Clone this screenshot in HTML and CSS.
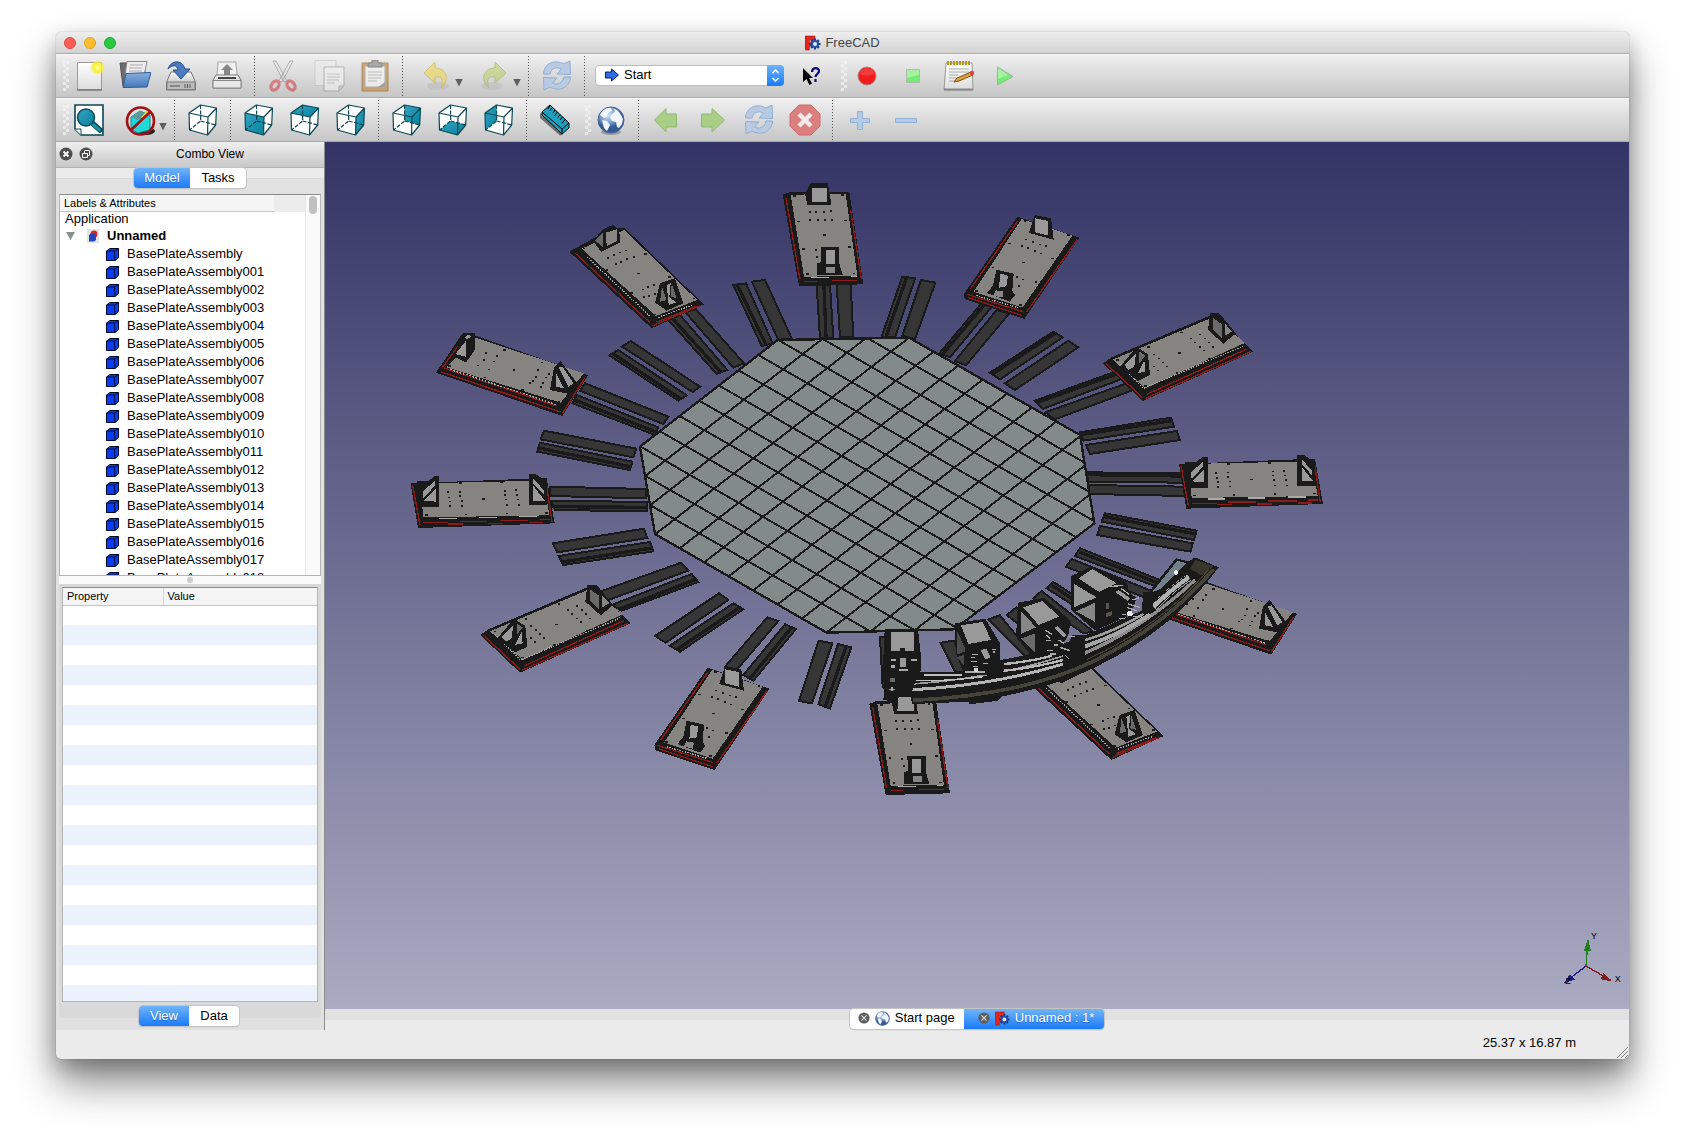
FILE: index.html
```html
<!DOCTYPE html>
<html lang="en">
<head>
<meta charset="utf-8">
<title>FreeCAD</title>
<link rel="stylesheet" href="styles.css">
</head>
<body>
<svg class="defs" aria-hidden="true">
  <defs>
    <linearGradient id="g-paper" x1="0" y1="0" x2="0" y2="1"><stop offset="0" stop-color="#fff"/><stop offset="1" stop-color="#dcdcdc"/></linearGradient>
    <linearGradient id="g-metal" x1="0" y1="0" x2="0" y2="1"><stop offset="0" stop-color="#fafafa"/><stop offset="1" stop-color="#a8a8a8"/></linearGradient>
    <linearGradient id="g-blue" x1="0" y1="0" x2="0" y2="1"><stop offset="0" stop-color="#8ab0dd"/><stop offset="1" stop-color="#4477b8"/></linearGradient>
    <linearGradient id="g-teal" x1="0" y1="0" x2="1" y2="1"><stop offset="0" stop-color="#34a6c2"/><stop offset="1" stop-color="#067f9b"/></linearGradient>
    <radialGradient id="g-sun"><stop offset="0" stop-color="#fff"/><stop offset=".3" stop-color="#fff94a"/><stop offset=".65" stop-color="#f7ee2c" stop-opacity=".9"/><stop offset="1" stop-color="#f7ee2c" stop-opacity="0"/></radialGradient>
    <radialGradient id="g-globe" cx=".4" cy=".3"><stop offset="0" stop-color="#cfe2f7"/><stop offset=".6" stop-color="#7ba2d3"/><stop offset="1" stop-color="#345a94"/></radialGradient>
    <g id="cube-lines" fill="none" stroke="#0b4754" stroke-width="1.2" stroke-linejoin="round">
      <path stroke-dasharray="4 1.5" d="M13.5 1 13.7 17 2.500 26M13.700 17 28.700 21"/>
      <path d="M2 9 21 13 20.500 31 2.500 26zM2 9 13.500 1 29.500 4 21 13M29.500 4 28.700 21 20.500 31"/>
    </g>
    <g id="sync" fill="#b9cbe2" stroke="#8faed4">
      <path d="M2.500 14C3 3 14 -1 23 4L29 1 29.500 14.500 16 14 20.500 9C15 6 10 9 9 14z"/>
      <path d="M29.500 17C29 28 18 32 9 27L3 30 2.500 17.500 16 18 11.500 23C16 26 22 23 23 17z"/>
    </g>
    <g id="freecad">
      <path d="M0 1h10v4H4.500v2.500H8V11H4.500v4H0z" fill="#e8241c" stroke="#8f120d" stroke-width=".5"/>
      <path d="M10 3.500v11M4.500 9h11M6.100 5.100l7.800 7.800M13.900 5.100l-7.800 7.800" stroke="#123a8a" stroke-width="2.200"/>
      <circle cx="10" cy="9" r="3.800" fill="#224fa8"/><circle cx="10" cy="9" r="2" fill="#e4eaf5"/>
    </g>
    <g id="globe"><circle cx="16" cy="16" r="13" fill="url(#g-globe)" stroke="#46649a"/>
      <path d="M5 11C8 5 13 3.500 16 4l1 3-4 2-1 4-3 1zM7 16l5 1 3 4-3 6-3-3zM19 5c4 1 7 5 9 10l-1 5-3 4-2-1-1-5-4-1-2-4 3-4 2-1z" fill="#f3f6fb"/></g>
    <g id="part"><path d="M.5 3 4 .5H12.500V9.500L9 12.500H.5z" fill="#0b3df0" stroke="#00082a"/><path d="M.5 3H8.500L12.500 .5M8.500 3 9 12.500" fill="none" stroke="#00082a"/></g>
    <g id="close"><circle cx="7" cy="7" r="6.500" fill="#4d4d4d"/><path d="M4.500 4.500l5 5M9.500 4.500l-5 5" stroke="#fff" stroke-width="1.800"/></g>
    <g id="close-tab"><circle cx="7" cy="7" r="6.500" fill="#5e5e5e"/><path d="M4 4l6 6M10 4l-6 6" stroke="#ddd" stroke-width="1.300"/></g>
  </defs>
</svg>

<main class="window">
  <header class="titlebar">
    <div class="lights"><button class="light red" aria-label="Close"></button><button class="light amber" aria-label="Minimize"></button><button class="light green" aria-label="Zoom"></button></div>
    <h1 class="title"><svg width="16" height="16" viewBox="0 0 16 16"><use href="#freecad"/></svg>FreeCAD</h1>
  </header>

  <div class="toolbar" role="toolbar" aria-label="File">
    <span class="grip"></span>
    <button class="tool" aria-label="New"><svg viewBox="0 0 32 32"><path d="M4.500 2.500h24v27h-24z" fill="url(#g-paper)" stroke="#9b9b9b"/><path d="M4 30h25" stroke="#777" stroke-width="1.500"/><circle cx="24.500" cy="7.500" r="7.500" fill="url(#g-sun)"/></svg></button>
    <button class="tool" aria-label="Open"><svg viewBox="0 0 32 32"><path d="M1 3h9l2 2h14l-1 20-21 1z" fill="#6d6d6d" stroke="#505050"/><path d="M8 1.500h20l-3 14H6z" fill="#eee" stroke="#888"/><path d="M11 5h13M10 8h13M10 11h13" stroke="#aaa"/><path d="M7 13.500l25-1-4 14.500-24 .5z" fill="url(#g-blue)" stroke="#2d5a97"/></svg></button>
    <button class="tool" aria-label="Save"><svg viewBox="0 0 32 32"><path d="M6 12h20l4.500 10v8h-29v-8z" fill="url(#g-metal)" stroke="#777"/><path d="M2 22h28v7.500H2z" fill="#bcbcbc" stroke="#808080"/><path d="M5 26h10M20 24v4M22.500 24v4M25 24v4" stroke="#555"/><path d="M3 9C6 0 17-1 20 9h5l-9 10-8-9h5C12 5 8 4 3 9z" fill="#4a7abf" stroke="#244d8b"/></svg></button>
    <button class="tool" aria-label="Print"><svg viewBox="0 0 32 32"><path d="M7 2h18l1 14H6z" fill="#f1f1f1" stroke="#a5a5a5"/><path d="M16 4l6 6h-3v5h-6v-5h-3z" fill="#888"/><path d="M5 15h22l3 5v8H2v-8z" fill="url(#g-metal)" stroke="#777"/><path d="M7 17h18v2H7z" fill="#444"/><path d="M2 20.500h28v7.500H2z" fill="#e8e8e8" stroke="#888"/></svg></button>
    <span class="sep"></span>
    <button class="tool faded" aria-label="Cut" disabled><svg viewBox="0 0 32 32"><path d="M6 1l3 0 11 20-3 1zM26 1l-3 0L12 21l3 1z" fill="#eee" stroke="#777"/><g fill="none" stroke="#d42c2c" stroke-width="3.200"><ellipse cx="8" cy="25.500" rx="3.500" ry="5" transform="rotate(35 8 25.500)"/><ellipse cx="24" cy="25.500" rx="3.500" ry="5" transform="rotate(-35 24 25.500)"/></g></svg></button>
    <button class="tool faded" aria-label="Copy" disabled><svg viewBox="0 0 32 32"><path d="M2 .5h21v25H2z" fill="#eee" stroke="#bbb"/><path d="M11 7h20v19l-5 5H11z" fill="#f8f8f8" stroke="#888"/><path d="M14 14h13M14 17h13M14 20h12M14 23h8" stroke="#aaa"/><path d="M31 26h-5v5z" fill="#ccc" stroke="#888"/></svg></button>
    <button class="tool half" aria-label="Paste" disabled><svg viewBox="0 0 32 32"><path d="M3 3h26v28H3z" fill="#c08b3c" stroke="#8b6224"/><path d="M6 6h20v21H6z" fill="#f6f6f6" stroke="#999"/><path d="M9 12h14M9 15h14M9 18h13M9 21h9" stroke="#aaa"/><path d="M26 22v5h-7z" fill="#888"/><path d="M9 7V3h4V0h6v3h4v4z" fill="#888" stroke="#555"/></svg></button>
    <span class="sep"></span>
    <button class="tool menu" aria-label="Undo" disabled><svg class="faded" viewBox="0 0 32 32"><ellipse cx="18" cy="26" rx="11" ry="4" fill="#999" opacity=".4"/><path d="M4 13L15 2v6C27 8 30 20 21 28 24 20 22 16 15 17v6z" fill="#f0d93a" stroke="#c2a21c"/></svg><span class="drop"></span></button>
    <button class="tool menu" aria-label="Redo" disabled><svg class="faded" viewBox="0 0 32 32"><ellipse cx="14" cy="26" rx="11" ry="4" fill="#999" opacity=".4"/><path d="M28 13L17 2v6C5 8 2 20 11 28 8 20 10 16 17 17v6z" fill="#b3cf5a" stroke="#86a63a"/></svg><span class="drop"></span></button>
    <span class="sep"></span>
    <button class="tool" aria-label="Refresh" disabled><svg viewBox="0 0 32 32"><use href="#sync"/></svg></button>
    <span class="sep"></span>
    <div class="combo">
      <svg class="combo-icon" viewBox="0 0 14 14"><path d="M.5 4h6V1l7 6-7 6v-3h-6z" fill="#2b6ee8" stroke="#0a1f55"/></svg>
      <select aria-label="Workbench"><option>Start</option></select>
      <svg class="combo-arrows" viewBox="0 0 16 21"><path d="M5 8l3-3 3 3M5 13l3 3 3-3" fill="none" stroke="#fff" stroke-width="1.500"/></svg>
    </div>
    <button class="tool" aria-label="What's this?"><svg viewBox="0 0 32 32"><path d="M8 8v14l3.500-3 3 6 2.500-1.500-3-5.500h4z" fill="#000"/><path d="M17 12c0-5 7-5 7-1 0 3-3.500 3-3.500 6M20.500 19v3" fill="none" stroke="#0a0a80" stroke-width="2.200"/></svg></button>
    <span class="grip"></span>
    <button class="tool" aria-label="Record macro"><svg viewBox="0 0 32 32"><circle cx="16" cy="16" r="9" fill="#ee1c1c" stroke="#b98080"/><path d="M9 14a7 6 0 0 1 14 0q-7 3-14 0z" fill="#f43a3a"/></svg></button>
    <button class="tool" aria-label="Stop macro" disabled><svg viewBox="0 0 32 32"><path d="M9.500 9.500h13v13h-13z" fill="#72ee72" stroke="#b0b8b0"/><path d="M10 10h12v5l-12 3z" fill="#a6f2a0"/></svg></button>
    <button class="tool" aria-label="Macros"><svg viewBox="0 0 32 32"><path d="M3 3h26l1 27H1z" fill="url(#g-paper)" stroke="#999"/><path d="M1 29.500h29" stroke="#888" stroke-width="2"/><path d="M4 3h23" stroke="#b79a1a" stroke-width="4" stroke-dasharray="2 1"/><path d="M6 9h20M6 12h20M6 15h9M6 18h13M6 21h6" stroke="#aaa"/><path d="M11 22l3-4 14-6 2 3-14 6z" fill="#e0a040" stroke="#7a5316"/><circle cx="29" cy="13" r="2.200" fill="#e34234"/></svg></button>
    <button class="tool" aria-label="Run macro" disabled><svg viewBox="0 0 32 32"><path d="M8.500 7v18L24 16.500z" fill="#72ee72" stroke="#a0b0a0"/><path d="M9 8v11l10-4z" fill="#a6f2a0"/></svg></button>
  </div>

  <div class="toolbar" role="toolbar" aria-label="View">
    <span class="grip"></span>
    <button class="tool" aria-label="Fit all"><svg viewBox="0 0 32 32"><path d="M2 1h28v30H8l-6-6z" fill="#fff" stroke="#0b4754" stroke-width="1.600"/><path d="M2 25h6v6" fill="#fff" stroke="#0b4754"/><path d="M18 18l9 8" stroke="#0b4754" stroke-width="5.500" stroke-linecap="round"/><path d="M19.500 20l7 6" stroke="#1b91ac" stroke-width="3" stroke-linecap="round"/><circle cx="13" cy="13.500" r="8.500" fill="url(#g-teal)" stroke="#0b4754" stroke-width="1.500"/></svg></button>
    <button class="tool menu" aria-label="Draw style"><svg viewBox="0 0 32 32"><ellipse cx="22" cy="27" rx="9" ry="4" fill="#222"/><path d="M7 13l9-6 10 4v15l-13 3-6-5z" fill="#20d8d8" stroke="#0a8f96"/><path d="M7 13l9-6 10 4-12 5z" fill="#5b9aa0"/><path d="M18 14l8-9" stroke="#f2df1e" stroke-width="2.500"/><circle cx="16.500" cy="17" r="13.500" fill="none" stroke="#a30f12" stroke-width="2.600"/><path d="M7 26L26 8" stroke="#a30f12" stroke-width="2.600"/></svg><span class="drop"></span></button>
    <span class="sep"></span>
    <button class="tool" aria-label="Axonometric"><svg viewBox="0 0 32 32"><path d="M2 9 13.500 1 29.500 4 28.700 21 20.500 31 2.500 26z" fill="#fff"/><use href="#cube-lines"/></svg></button>
    <span class="sep"></span>
    <button class="tool" aria-label="Front"><svg viewBox="0 0 32 32"><path d="M2 9 13.500 1 29.500 4 28.700 21 20.500 31 2.500 26z" fill="#fff"/><path d="M2 9 21 13 20.500 31 2.500 26z" fill="url(#g-teal)"/><use href="#cube-lines"/></svg></button>
    <button class="tool" aria-label="Top"><svg viewBox="0 0 32 32"><path d="M2 9 13.500 1 29.500 4 28.700 21 20.500 31 2.500 26z" fill="#fff"/><path d="M2 9 13.500 1 29.500 4 21 13z" fill="url(#g-teal)"/><use href="#cube-lines"/></svg></button>
    <button class="tool" aria-label="Right"><svg viewBox="0 0 32 32"><path d="M2 9 13.500 1 29.500 4 28.700 21 20.500 31 2.500 26z" fill="#fff"/><path d="M21 13 29.500 4 28.700 21 20.500 31z" fill="url(#g-teal)"/><use href="#cube-lines"/></svg></button>
    <span class="sep"></span>
    <button class="tool" aria-label="Rear"><svg viewBox="0 0 32 32"><path d="M2 9 13.500 1 29.500 4 28.700 21 20.500 31 2.500 26z" fill="#fff"/><path d="M13.500 1 29.500 4 28.700 21 13.700 17z" fill="url(#g-teal)"/><use href="#cube-lines"/></svg></button>
    <button class="tool" aria-label="Bottom"><svg viewBox="0 0 32 32"><path d="M2 9 13.500 1 29.500 4 28.700 21 20.500 31 2.500 26z" fill="#fff"/><path d="M2.500 26 13.700 17 28.700 21 20.500 31z" fill="url(#g-teal)"/><use href="#cube-lines"/></svg></button>
    <button class="tool" aria-label="Left"><svg viewBox="0 0 32 32"><path d="M2 9 13.500 1 29.500 4 28.700 21 20.500 31 2.500 26z" fill="#fff"/><path d="M2 9 13.500 1 13.700 17 2.500 26z" fill="url(#g-teal)"/><use href="#cube-lines"/></svg></button>
    <span class="sep"></span>
    <button class="tool" aria-label="Measure"><svg viewBox="0 0 32 32"><path d="M1 9v5l20 17.500 3-1 -1-7z" fill="#555" opacity=".8"/><path d="M3 8l8-7 19 18v5l-7 6L3 11z" fill="#1f9fbe" stroke="#000"/><path d="M23 25l7-6M23 25v4M3 8l20 17M11 1l-2 4M13.500 3.500l-2.500 3M16 6l-2 3M18.500 8l-3 4M21 10.500l-2 3M23.500 13l-2.500 3M26 15.500l-3 4" stroke="#000" fill="none"/></svg></button>
    <span class="grip"></span>
    <button class="tool" aria-label="Open website"><svg viewBox="0 0 32 32"><ellipse cx="16" cy="28" rx="10" ry="3" fill="#777" opacity=".6"/><use href="#globe"/></svg></button>
    <span class="sep"></span>
    <button class="tool" aria-label="Previous page" disabled><svg viewBox="0 0 32 32"><path d="M3.500 16L15 4.500V10h10.500v13H15v5z" fill="#a9cf86" stroke="#8fba72"/></svg></button>
    <button class="tool" aria-label="Next page" disabled><svg viewBox="0 0 32 32"><path d="M27.500 16L15 4.500V10H4.500v13H15v5z" fill="#a9cf86" stroke="#8fba72"/></svg></button>
    <button class="tool" aria-label="Reload page" disabled><svg viewBox="0 0 32 32"><use href="#sync"/></svg></button>
    <button class="tool" aria-label="Stop loading" disabled><svg viewBox="0 0 32 32"><path d="M10 1h12l9 9v12l-9 9H10l-9-9V10z" fill="#dc7f7f" stroke="#cc6b6b"/><path d="M10 10l12 12M22 10L10 22" stroke="#f4eaea" stroke-width="4.500"/></svg></button>
    <span class="sep"></span>
    <button class="tool" aria-label="Zoom in" disabled><svg viewBox="0 0 32 32"><path d="M12.500 7.500h5v7h7v4h-7v7h-5v-7h-7v-4h7z" fill="#b2cbe6" stroke="#93b1d6"/></svg></button>
    <button class="tool" aria-label="Zoom out" disabled><svg viewBox="0 0 32 32"><path d="M4.500 14.500h21v4h-21z" fill="#b2cbe6" stroke="#93b1d6"/></svg></button>
  </div>

  <div class="body">
    <aside class="dock">
      <header class="dock-title">
        <button class="mini" aria-label="Close panel"><svg width="14" height="14"><use href="#close"/></svg></button>
        <button class="mini" aria-label="Float panel"><svg width="14" height="14"><circle cx="7" cy="7" r="6.500" fill="#4d4d4d"/><path d="M3.500 6.500h5v4h-5zM5.500 6V3.500h5v5H9" fill="none" stroke="#fff"/></svg></button>
        <h2>Combo View</h2>
      </header>
      <div class="dock-page">
        <div class="tabs top-tabs" role="tablist"><button class="tab on" role="tab" aria-selected="true">Model</button><button class="tab" role="tab" aria-selected="false">Tasks</button></div>
        <section class="tree">
          <div class="tree-head"><span>Labels &amp; Attributes</span></div>
          <div class="tree-scroll"><span class="thumb"></span></div>
          <ul class="tree-list">
            <li class="app">Application</li>
            <li class="doc"><span class="drop open"></span><svg width="12" height="14"><path d="M0 0h12v14H0z" fill="#e4e4e4"/><circle cx="7" cy="5" r="3.500" fill="#d8281d"/><path d="M2 6l2-1.500h5V11l-2 1.500H2z" fill="#2446b8"/></svg><b>Unnamed</b></li>
            <li class="item"><svg width="13" height="13"><use href="#part"/></svg>BasePlateAssembly</li>
            <li class="item"><svg width="13" height="13"><use href="#part"/></svg>BasePlateAssembly001</li>
            <li class="item"><svg width="13" height="13"><use href="#part"/></svg>BasePlateAssembly002</li>
            <li class="item"><svg width="13" height="13"><use href="#part"/></svg>BasePlateAssembly003</li>
            <li class="item"><svg width="13" height="13"><use href="#part"/></svg>BasePlateAssembly004</li>
            <li class="item"><svg width="13" height="13"><use href="#part"/></svg>BasePlateAssembly005</li>
            <li class="item"><svg width="13" height="13"><use href="#part"/></svg>BasePlateAssembly006</li>
            <li class="item"><svg width="13" height="13"><use href="#part"/></svg>BasePlateAssembly007</li>
            <li class="item"><svg width="13" height="13"><use href="#part"/></svg>BasePlateAssembly008</li>
            <li class="item"><svg width="13" height="13"><use href="#part"/></svg>BasePlateAssembly009</li>
            <li class="item"><svg width="13" height="13"><use href="#part"/></svg>BasePlateAssembly010</li>
            <li class="item"><svg width="13" height="13"><use href="#part"/></svg>BasePlateAssembly011</li>
            <li class="item"><svg width="13" height="13"><use href="#part"/></svg>BasePlateAssembly012</li>
            <li class="item"><svg width="13" height="13"><use href="#part"/></svg>BasePlateAssembly013</li>
            <li class="item"><svg width="13" height="13"><use href="#part"/></svg>BasePlateAssembly014</li>
            <li class="item"><svg width="13" height="13"><use href="#part"/></svg>BasePlateAssembly015</li>
            <li class="item"><svg width="13" height="13"><use href="#part"/></svg>BasePlateAssembly016</li>
            <li class="item"><svg width="13" height="13"><use href="#part"/></svg>BasePlateAssembly017</li>
            <li class="item"><svg width="13" height="13"><use href="#part"/></svg>BasePlateAssembly018</li>
          </ul>
        </section>
        <div class="splitter"><span></span></div>
        <section class="props">
          <div class="props-box">
            <table>
              <thead><tr><th class="name">Property</th><th>Value</th></tr></thead>
              <tbody>
                <tr><td></td><td></td></tr><tr><td></td><td></td></tr><tr><td></td><td></td></tr><tr><td></td><td></td></tr>
                <tr><td></td><td></td></tr><tr><td></td><td></td></tr><tr><td></td><td></td></tr><tr><td></td><td></td></tr>
                <tr><td></td><td></td></tr><tr><td></td><td></td></tr><tr><td></td><td></td></tr><tr><td></td><td></td></tr>
                <tr><td></td><td></td></tr><tr><td></td><td></td></tr><tr><td></td><td></td></tr><tr><td></td><td></td></tr>
                <tr><td></td><td></td></tr><tr><td></td><td></td></tr><tr><td></td><td></td></tr><tr><td></td><td></td></tr>
              </tbody>
            </table>
          </div>
        </section>
        <div class="tabs low-tabs" role="tablist"><button class="tab on" role="tab" aria-selected="true">View</button><button class="tab" role="tab" aria-selected="false">Data</button></div>
      </div>
    </aside>

    <section class="mdi">
      <div class="viewport">
        <svg class="scene" viewBox="0 0 3912 2601" role="img" aria-label="3D model">
          <defs>
            <g id="plate-a" transform="translate(225 84)">
              <path class="ink" d="M1148 74 1170 66H1348L1390 343 1197 348z"/>
              <path class="top" d="M1172 74 1337 72 1372 318 1212 320z"/>
              <path class="red" d="M1158 84 1200 328M1352 120 1384 328M1212 334H1250M1297 332H1372"/>
              <path class="shine thin" d="M1233 323H1287M1352 320H1370"/>
              <path class="ink" d="M1215 70 1232 40H1284L1294 104H1222z"/><path class="lit" d="M1237 54H1282V97H1237z"/>
              <path class="ink" d="M1262 230H1317V278L1328 314H1252V280L1264 276z"/><path class="lit" d="M1277 240H1304V283H1277z"/><path class="mid" d="M1278 290H1306V308H1278z"/>
              <path class="bolts" d="M1228 126h1M1248 126h1M1272 125h1M1293 122h1M1230 149h1M1254 149h1M1275 149h1M1296 149h1M1194 154h3M1335 151h3M1271 194h3M1208 236h3M1347 231h3M1246 239h1M1250 261h1M1182 77h3M1325 74h3M1220 312h3M1360 310h3"/>
            </g>
            <g id="plate-b" transform="translate(225 84)">
              <path class="ink" d="M508 245 640 172 674 174 912 403 755 475z"/>
              <path class="top" d="M545 236 672 180 892 390 768 438z"/>
              <path class="red" d="M526 250 750 458M756 468 900 407M770 456 890 408"/>
              <path class="shine thin" d="M560 260 752 440M775 442 880 404" stroke-dasharray="4 4"/>
              <path class="ink" d="M578 212 610 178 640 164 658 182 660 218 604 246z"/><path class="dim" d="M585 212 608 190V230z"/><path class="mid" d="M618 188 650 178V214L620 228z"/>
              <path class="ink" d="M765 398 780 340 825 325 850 400 800 422z"/><path class="dim" d="M780 395 786 350 800 390zM812 380 815 342 830 385z"/><path class="lit" d="M800 345 812 340 808 380 828 398 806 405z"/>
              <path class="bolts" d="M640 255h1M660 247h1M678 241h1M624 264h1M646 282h1M662 275h1M681 267h1M700 261h1M619 300h3M735 251h3M714 310h3M693 368h3M806 320h3M729 358h1M744 350h1M761 345h1M732 381h1M747 378h1M764 371h1M550 235h3M762 433h3M880 385h3"/>
            </g>
            <g id="plate-c" transform="translate(225 84)">
              <path class="ink" d="M108 608 188 490 230 498 564 616 487 738z"/>
              <path class="top" d="M140 592 222 502 552 610 482 698z"/>
              <path class="red" d="M124 606 482 726M132 594 470 708M487 730 554 624M128 592 180 520"/>
              <path class="shine thin" d="M150 598 470 704" stroke-dasharray="5 5"/>
              <path class="ink" d="M160 558 190 490 226 488 224 540 198 578z"/><path class="lit" d="M166 552 198 512V560z"/><path class="lit" d="M196 502 205 494 215 500 200 508z"/>
              <path class="ink" d="M450 660 462 592 482 574 532 640 508 672z"/><path class="lit" d="M468 650V610L492 655zM476 592 488 590 520 640 505 650z"/>
              <path class="bolts" d="M257 548h1M290 558h1M252 570h1M282 574h1M232 586h1M265 598h1M312 540h3M424 577h3M340 600h3M253 622h3M366 659h3M413 600h1M447 612h1M406 620h1M436 622h1M397 632h1M389 638h1M429 638h1M421 650h1M147 587h3M475 695h3"/>
            </g>
            <g id="plate-d" transform="translate(225 84)">
              <path class="ink" d="M32 940 440 924 464 1060 54 1074z"/>
              <path class="top" d="M60 940 432 932 448 1036 70 1042z"/>
              <path class="red" d="M38 945 60 1066M438 935 456 1055M70 1058H145M180 1054H262M300 1051H385M145 1062H190M265 1060H310M388 1057H430M420 1048H450"/>
              <path class="shine thin" d="M118 1045H170M238 1042H290M358 1039H412"/>
              <path class="ink" d="M50 934H84L104 918H118V1012H60z"/><path class="lit" d="M68 966 104 932V948L70 985zM72 992 108 955V995z"/>
              <path class="ink" d="M386 1006V912H406L440 935 442 1006z"/><path class="lit" d="M400 925 432 962V975L400 940zM400 948 435 992H400z"/>
              <path class="bolts" d="M144 966h1M178 965h1M145 982h1M180 978h1M148 994h1M184 992h1M150 1008h1M185 1007h1M249 986h3M180 939h3M303 937h3M196 1033h3M319 1030h3M314 962h1M348 960h1M315 974h1M350 974h1M318 988h1M352 988h1M321 1004h1M355 1004h1M78 1034h3M437 1028h3"/>
            </g>
            <g id="plate-e" transform="translate(225 1134)">
              <path class="ink" d="M241 345 265 328 575 196 692 310 360 458z"/>
              <path class="top" d="M270 334 577 204 666 284 368 420z"/>
              <path class="red" d="M250 346 360 448M368 450 684 310M372 438 672 302"/>
              <path class="shine thin" d="M285 342 362 420 660 294" stroke-dasharray="4 4"/>
              <path class="ink" d="M562 195H590L640 255 602 286 556 245z"/><path class="dim" d="M570 208 598 228V270L570 242z"/><path class="mid" d="M606 225 628 250 606 262z"/>
              <path class="ink" d="M292 355 342 296 376 318 382 380 345 398z"/><path class="lit" d="M305 350 340 315 335 355 318 365zM365 335 368 370 345 375z"/><path class="dim" d="M350 310 368 322 350 345z"/>
              <path class="bolts" d="M530 258h1M504 270h1M546 270h1M516 282h1M558 282h1M530 295h1M570 295h1M542 306h1M475 252h3M468 313h3M559 331h3M376 296h3M461 374h3M393 318h1M408 330h1M420 342h1M393 354h1M432 354h1M405 366h1M283 334h3M366 412h3"/>
            </g>
            <g id="plate-f" transform="translate(225 1134)">
              <path class="ink" d="M763 675 923 443 1109 506 944 750 765 690z"/>
              <path class="top" d="M792 668 936 450 1088 500 938 716z"/>
              <path class="red" d="M950 730 1102 512M772 676 940 728M776 686 938 740M782 660 924 456"/>
              <path class="shine thin" d="M800 680 925 716" stroke-dasharray="4 4"/>
              <path class="ink" d="M958 492 976 438 1024 448 1032 512z"/><path class="lit" d="M976 448 1016 456V500L976 490z"/>
              <path class="ink" d="M832 672 850 650 860 602 912 614 908 665 916 678 900 698z"/><path class="lit" d="M872 614 895 620 890 652 868 656z"/><path class="mid" d="M858 664 882 668 878 686 852 680z"/>
              <path class="bolts" d="M948 511h1M968 518h1M990 526h1M1008 531h1M936 531h1M954 537h1M975 546h1M993 553h1M897 523h3M1026 568h3M939 580h3M848 595h3M977 638h3M921 624h1M939 631h1M927 650h1M798 666h3M930 707h3M1075 497h3M944 455h3"/>
            </g>
            <clipPath id="floor"><path d="M945 914 1358 594 1752 587 2265 879 2308 1144 1930 1430 1885 1462 1505 1472 990 1176z"/></clipPath>
          </defs>

          <g class="rails" transform="translate(225 84)">
            <path d="M1310 342H1352L1360 502H1320zM1056 335 1095 330 1175 505 1135 510zM855 425 888 418 1032 580 1000 593zM666 530 692 513 900 650 878 666zM540 662 555 640 805 740 790 762zM422 808 432 782 709 836 700 862zM450 950 737 957V985L452 978z"/>
            <path d="M1250 345H1290L1300 505H1260zM1000 345 1038 340 1118 520 1085 528zM805 450 840 435 982 600 950 612zM628 556 655 540 860 676 835 692zM518 700 530 675 775 772 765 795zM412 845 420 818 697 875 690 900zM452 992 740 996V1024L465 1020z"/>
            <path class="ridge" d="M1272 345 1278 505M1012 345 1098 524M818 446 962 606M637 550 842 686M524 690 768 786M416 834 692 890M456 1010 740 1012"/>
          </g>
          <g class="rails" transform="translate(225 1134)">
            <path d="M458 70 732 26 742 54 472 97zM600 215 843 128 865 152 625 240zM765 348 957 220 985 240 797 368zM975 440 1102 292 1135 303 1010 450zM1197 543 1256 362 1297 370 1236 550z"/>
            <path d="M476 108 750 66 760 94 490 135zM635 255 875 162 895 186 665 272zM810 377 1000 250 1030 268 840 395zM1030 465 1155 313 1188 327 1060 482zM1255 553 1314 372 1354 382 1290 565z"/>
            <path class="ridge" d="M486 126 756 84M655 268 888 178M828 390 1020 262M1048 478 1175 322M1276 560 1338 380"/>
          </g>
          <g class="rails" transform="translate(1605 84)">
            <path d="M127 498 183 330 226 338 165 507zM285 573 410 420 448 430 318 586zM435 640 625 512 655 532 465 660zM556 727 800 640 825 658 585 748zM678 825 950 783 960 810 690 852zM685 945 970 950 975 978 688 972zM720 1068 998 1120 992 1145 712 1095z"/>
            <path d="M65 500 127 320 165 325 105 502zM238 550 365 400 400 405 270 562zM390 608 580 485 608 502 420 628zM525 692 760 607 790 625 548 717zM660 787 933 743 942 770 670 812zM680 907 965 910 968 938 685 935zM735 1030 1010 1082 1002 1110 725 1055z"/>
            <path class="ridge" d="M78 500 140 322M248 552 375 402M398 612 586 490M530 698 770 612M662 794 936 752M682 914 966 918M734 1040 1008 1092"/>
          </g>
          <g class="rails" transform="translate(1575 1134)">
            <path d="M665 117 905 213 890 235 648 140zM575 213 730 335 700 340 550 235zM450 286 550 410 530 412 415 298zM272 368 312 362 350 455H315zM90 352H110V510L98 500z"/>
            <path d="M690 85 930 180 920 200 675 108zM610 186 740 270V300L590 205zM500 262 560 330 540 340 470 285z"/>
            <path class="ridge" d="M688 96 926 190M605 196 740 284"/>
          </g>

          <path class="floor" d="M945 914 1358 594 1752 587 2265 879 2308 1144 1930 1430 1885 1462 1505 1472 990 1176z"/>
          <g clip-path="url(#floor)" class="grid">
            <path d="M829 1005.400l954 547m-895-592.700l954 547m-895-592.700l954 547m-895-592.700l954 547m-895-592.700l954 547m-895-592.700l954 547m-895-592.700l954 547m-895-592.700l954 547m-895-592.700l954 547m-895-592.700l954 547m-895-592.700l954 547m-895-592.700l954 547"/>
            <path d="M843.400 1093.100l767-594m-693.600 636.100l767-594m-693.600 636.100l767-594m-693.600 636.100l767-594m-693.600 636.100l767-594m-693.600 636.100l767-594m-693.600 636.100l767-594m-693.600 636.100l767-594m-693.600 636.100l767-594m-693.600 636.100l767-594m-693.600 636.100l767-594m-693.600 636.100l767-594"/>
          </g>

          <use href="#plate-a"/><use href="#plate-a" x="260" y="1527"/>
          <use href="#plate-b"/><use href="#plate-b" x="1379" y="1295"/>
          <use href="#plate-c"/><use href="#plate-c" x="2127" y="716"/>
          <use href="#plate-d"/><use href="#plate-d" x="2305" y="-58"/>
          <use href="#plate-e"/><use href="#plate-e" x="1868" y="-815"/>
          <use href="#plate-f"/><use href="#plate-f" x="929" y="-1353"/>

          <g class="machine" transform="translate(1575 1134)">
            <path class="ink" d="M978 115 1016 124 1035 112 1106 142Q970 330 735 442 640 490 455 530L445 542 360 553 355 545 190 552 100 540 108 470 190 456 330 457 460 418Q560 405 700 348L880 270 905 205z"/>
            <path d="M982 122 1010 130 935 205 905 218z" fill="#71808c"/>
            <path d="M1036 120 1092 138 1055 166 1020 146z" fill="#38362a"/>
            <path class="band" d="M1090 148Q950 315 730 424 520 525 190 541" stroke="#45443a" stroke-width="11"/>
            <path class="band" d="M1075 150Q930 320 712 418" stroke="#4f4237" stroke-width="3"/>
            <path class="band" d="M1035 180Q880 325 698 402" stroke="#8c8c8c" stroke-width="10"/>
            <path class="band" d="M1018 172Q960 210 912 262" stroke="#b0b0b0" stroke-width="22"/>
            <path class="band" d="M1024 176Q968 214 918 266M1008 168Q955 206 908 250" stroke="#1a1a1a" stroke-width="3"/>
            <path class="band" d="M900 284Q800 348 702 380" stroke="#a6a6a6" stroke-width="12"/>
            <path class="band" d="M880 282Q800 332 706 360" stroke="#9c9c9c" stroke-width="8"/>
            <path class="band" d="M640 432Q420 500 152 511" stroke="#b4b4b4" stroke-width="9"/>
            <path class="band" d="M640 408Q430 475 188 492" stroke="#9c9c9c" stroke-width="5"/>
            <path class="band" d="M605 408Q540 425 462 432M640 420Q540 445 462 452" stroke="#b6b6b6" stroke-width="7"/>
            <path class="band" d="M222 465H335M190 482Q300 484 400 470" stroke="#c0c0c0" stroke-width="4"/>
            <path class="ink" d="M668 345H706V400L690 430H648L640 395zM880 215H908V280H875zM422 435H460V475H422zM140 460H188V505H140z"/>

            <path class="ink" d="M104 328H204L212 400V452L190 500 180 535 104 520 98 460z"/>
            <path class="lit" d="M122 337H193V392H165V384H150V393H122z"/>
            <path class="shine" d="M124 420h14M124 440h12M184 420h16"/>
            <path class="lit" d="M150 415H168V440H150z"/>
            <path class="shine thin" d="M148 450h26M116 508h18M126 500v14"/>
            <path class="dim" d="M120 473h14v14h-14z"/>
            <path class="lit" d="M146 530 184 532 186 572H142z"/>

            <path class="ink" d="M314 310 406 296 450 370 450 440 462 470 340 458 318 400z"/>
            <path class="lit" d="M333 316 398 306 423 360 355 372z"/>
            <path d="M320 330 344 382V395L320 404zM322 412 342 404V438z" fill="#4b4b4b"/>
            <path class="lit" d="M392 392 408 385 422 412 406 418z"/>
            <path class="shine thin" d="M365 404h18M425 388h12M364 412h12M362 425h20M400 430h14M345 456h60M370 440h14M428 396h8"/>

            <path class="ink" d="M504 248 582 234 662 302 655 345 640 370 640 400 600 405 550 412 498 350z"/>
            <path class="lit" d="M520 262 578 243 627 290 566 315z"/>
            <path class="mid" d="M512 272 558 322 512 342z"/><path class="dim" d="M512 356 556 340V400z"/>
            <path class="lit" d="M612 324 624 318 650 345 640 352z"/>
            <path class="shine thin" d="M585 330l22 14M588 345l12 10M588 362h16M625 360l18 10M655 350h20M590 392h20M630 382l30 10M612 375h12M645 405l12 12M600 402h18"/>

            <path class="ink" d="M664 168 727 138 832 190 834 212 860 235 850 262 830 290 735 332 664 270z"/>
            <path class="lit" d="M685 175 727 147 800 190 748 216z"/>
            <path d="M672 192 740 232 672 262z" fill="#979998"/><path class="mid" d="M678 274 736 248V306z"/>
            <path class="lit" d="M796 216 806 210 842 236 832 242z"/>
            <path class="shine thin" d="M812 205l26 18M845 240l22-6M835 252l34 10M830 262l30 10M815 284h14M850 290h22M806 296h18M778 200l40-4"/>
            <path d="M768 250h8v18h-8zM768 280l18-6v12l-18 6z" fill="#5b5552"/>
            <circle cx="840" cy="281" r="8" fill="#e4e6ea"/><circle cx="978" cy="158" r="7" fill="#eceef2"/><circle cx="378" cy="450" r="7" fill="#cfd2d6"/>
          </g>

          <g transform="translate(3345 2304)" class="axes">
            <path d="M438 168 444 90" stroke="#1f7f1f"/><path d="M444 86 432 122H453z" fill="#1f7f1f"/>
            <path d="M438 168 514 212" stroke="#7f1f1f"/><path d="M518 215 490 190 482 208z" fill="#7f1f1f"/>
            <path d="M438 168 372 219" stroke="#1f1f7f"/><path d="M372 220 390 192 405 208z" fill="#1f1f7f"/>
            <text x="453" y="86">Y</text><text x="524" y="216">X</text><text x="376" y="221">Z</text>
          </g>
        </svg>
      </div>
      <div class="mdi-strip">
        <div class="tabs" role="tablist">
          <button class="tab doc-tab" role="tab" aria-selected="false"><svg width="12" height="12" viewBox="0 0 14 14"><use href="#close-tab"/></svg><svg width="15" height="15" viewBox="2 2 28 28"><use href="#globe"/></svg>Start page</button><button class="tab doc-tab on" role="tab" aria-selected="true"><svg width="12" height="12" viewBox="0 0 14 14"><use href="#close-tab"/></svg><svg width="15" height="15" viewBox="0 0 16 16"><use href="#freecad"/></svg>Unnamed : 1*</button>
        </div>
      </div>
    </section>
  </div>

  <footer class="status"><span>25.37 x 16.87 m</span><svg class="resize" width="12" height="12"><path d="M1 12L12 1M5 12l7-7M9 12l3-3" stroke="#888"/></svg></footer>
</main>
</body>
</html>
```
FILE: styles.css
```css
* { box-sizing: border-box; }

body {
  margin: 0;
  height: 100vh;
  min-height: 640px;
  padding: 32px 56px 80px;
  display: flex;
  background: #fff;
  color: #000;
  font: 13px/18px "Liberation Sans", Arial, sans-serif;
}

button, select { font: inherit; color: inherit; border: 0; padding: 0; background: none; }
h1, h2 { margin: 0; font-weight: normal; }
.defs { position: absolute; width: 0; height: 0; }

.window {
  flex: 1;
  min-width: 0;
  display: flex;
  flex-direction: column;
  overflow: hidden;
  border-radius: 5px;
  background: #ebebeb;
  box-shadow: 0 0 1px rgba(0, 0, 0, .5), 0 24px 42px rgba(0, 0, 0, .46), 0 8px 20px rgba(0, 0, 0, .22);
}

.titlebar {
  flex: none;
  height: 22px;
  display: grid;
  grid-template-columns: 1fr auto 1fr;
  align-items: center;
  padding: 0 8px;
  background: linear-gradient(#eee, #d2d2d2);
  border-bottom: 1px solid #a9a9a9;
}
.lights { display: flex; gap: 8px; }
.light { width: 12px; height: 12px; border-radius: 50%; border: 1px solid; }
.light.red { background: #ff5f57; border-color: #e0443e; }
.light.amber { background: #ffbd2e; border-color: #dea123; }
.light.green { background: #28c840; border-color: #1aab29; }
.title { display: flex; align-items: center; gap: 4px; font-size: 13px; line-height: 18px; color: #444; }

.toolbar {
  flex: none;
  height: 44px;
  display: flex;
  align-items: center;
  background: linear-gradient(#efefef, #c6c6c6);
  border-top: 1px solid #f8f8f8;
  border-bottom: 1px solid #a9a9a9;
}
.tool { flex: none; width: 46px; height: 42px; display: flex; align-items: center; justify-content: center; }
.tool svg { width: 32px; height: 32px; }
.faded svg, svg.faded { opacity: .5; }
.half svg { opacity: .65; }
.menu { width: 58px; justify-content: flex-start; padding-left: 12px; gap: 3px; }
.drop { width: 8px; height: 8px; margin-top: 13px; background: #606060; clip-path: polygon(0 0, 100% 0, 50% 100%); }
.sep {
  flex: none;
  width: 10px;
  height: 40px;
  background: repeating-linear-gradient(#555 0 1px, transparent 1px 3px) 4px 0 / 1px 100% no-repeat;
}
.grip {
  flex: none;
  width: 6px;
  height: 30px;
  margin: 0 -3px 0 7px;
  background:
    linear-gradient(#f4f4f4, #f4f4f4) 0 0 / 2px 2px no-repeat,
    conic-gradient(#f4f4f4 0 25%, transparent 0 50%, #f4f4f4 0 75%, transparent 0) 0 0 / 6px 6px;
  opacity: .7;
}

.combo {
  flex: none;
  position: relative;
  width: 189px;
  height: 21px;
  margin: 0 4px 2px 5px;
}
.combo select {
  appearance: none;
  display: block;
  width: 100%;
  height: 100%;
  padding: 0 20px 3px 28px;
  border: 1px solid #bdbdbd;
  border-radius: 4px;
  background: #fff;
}
.combo-icon { position: absolute; left: 10px; top: 3px; width: 14px; height: 14px; }
.combo-arrows { position: absolute; right: 0; top: 0; width: 17px; height: 21px; border-radius: 0 4px 4px 0; background: linear-gradient(#6cb3fa, #1a7bfb); pointer-events: none; }

.body { flex: 1; min-height: 0; display: flex; }

.dock { flex: none; width: 269px; display: flex; flex-direction: column; border-right: 1px solid #8c8c8c; }
.dock-title {
  flex: none;
  height: 26px;
  display: flex;
  align-items: center;
  gap: 6px;
  padding: 0 3px 1px;
  background: linear-gradient(#efefef, #c8c8c8);
  border-bottom: 1px solid #b5b5b5;
}
.dock-title h2 { flex: 1; text-align: center; font-size: 12px; line-height: 18px; }
.mini { width: 14px; height: 14px; display: block; }
.mini svg { display: block; }

.dock-page {
  flex: 1;
  min-height: 0;
  display: flex;
  flex-direction: column;
  padding: 0 3px 4px;
  background: linear-gradient(#ebebeb 10px, #d5d5d5 10px, #e1e1e1 11px);
}
.tabs { display: flex; align-self: center; border-radius: 4px; background: #fff; box-shadow: 0 0 0 1px #c4c4c4, 0 1px 1px #999; }
.tab { height: 20px; line-height: 18px; }
.tab.on { color: #fff; background: linear-gradient(#6fb4f8, #1a7bfb); text-shadow: 0 1px 1px rgba(0, 0, 80, .3); }
.tab:first-child { border-radius: 4px 0 0 4px; }
.tab:last-child { border-radius: 0 4px 4px 0; }
.top-tabs { margin-bottom: 6px; }
.top-tabs .tab { width: 56px; }
.low-tabs { margin-top: -12px; margin-right: 2px; z-index: 1; }
.low-tabs .tab { width: 50px; }

.tree {
  flex: 380 1 0;
  min-height: 0;
  display: grid;
  grid-template: 17px 1fr / 1fr 15px;
  overflow: hidden;
  background: #fff;
  border: 1px solid #b5b5b5;
  border-top-color: #8c8c8c;
}
.tree-head { padding-right: 31px; background: #ececec; font-size: 11px; line-height: 16px; }
.tree-head span { display: block; height: 17px; padding-left: 4px; background: #f5f5f5; border-bottom: 1px solid #c4c4c4; }
.tree-scroll { grid-column: 2; grid-row: 1 / 3; background: #fafafa; border-left: 1px solid #e6e6e6; padding: 1px 3px; }
.thumb { display: block; width: 8px; height: 18px; border-radius: 4px; background: #c1c1c1; }
.tree-list { grid-column: 1; grid-row: 2; min-height: 0; margin: 0; padding: 0; list-style: none; overflow: hidden; white-space: nowrap; }
.tree-list li { display: flex; align-items: center; height: 18px; }
.tree-list .app { height: 15px; padding: 0 0 2px 5px; }
.tree-list .doc { padding-left: 6px; }
.doc svg { margin: 0 8px 0 12px; }
.drop.open { width: 9px; height: 8px; margin: 0; background: #8c8c8c; }
.item { padding-left: 46px; gap: 8px; }

.splitter { flex: none; height: 8px; display: flex; justify-content: center; align-items: center; background: #fafafa; }
.splitter span { width: 6px; height: 6px; border-radius: 50%; background: #cdcdcd; }

.props { flex: 415 1 0; min-height: 0; padding: 3px 3px 16px; background: #d9d9d9; border-radius: 0 0 4px 4px; display: flex; }
.props-box { flex: 1; overflow: hidden; background: #fff; border: 1px solid #b5b5b5; border-top: 1px solid #8c8c8c; }
.props table { width: 100%; table-layout: fixed; border-collapse: collapse; }
.props th { height: 17px; padding: 0 0 0 4px; font-size: 11px; line-height: 16px; font-weight: normal; text-align: left; background: #f5f5f5; border-bottom: 1px solid #c4c4c4; }
.props .name { width: 100px; border-right: 1px solid #d4d4d4; }
.props td { height: 20px; padding: 0; }
.props tbody tr:nth-child(even) { background: #ebf2fe; }

.mdi { flex: 1; min-width: 0; display: flex; flex-direction: column; }
.viewport { flex: 1; min-height: 0; background: linear-gradient(#333365, #aaaac2); }
.scene { display: block; width: 100%; height: 100%; shape-rendering: crispEdges; }
.mdi-strip { flex: none; height: 21px; display: flex; align-items: flex-start; justify-content: center; background: linear-gradient(#e1e1e1 11px, #ebebeb 11px); }
.mdi-strip .tabs { align-self: flex-start; }
.doc-tab { display: flex; align-items: center; gap: 5px; padding: 0 9px 2px 8px; }
.doc-tab.on { padding: 0 10px 2px 14px; }

.status { flex: none; height: 29px; position: relative; display: flex; align-items: center; justify-content: flex-end; padding: 0 53px 4px; }
.resize { position: absolute; right: 1px; bottom: 1px; }

.ink { fill: #1a1a1a; }
.top { fill: #868481; }
.lit { fill: #999; }
.mid { fill: #868686; }
.dim { fill: #6a6a68; }
.scene .red { fill: none; stroke: #8f1a1c; stroke-width: 4; }
.shine { fill: none; stroke: #aaa; stroke-width: 8; }
.shine.thin { stroke-width: 4; }
.band { fill: none; }
.bolts { fill: none; stroke: #1a1a1a; stroke-width: 5; stroke-linecap: square; }
.rails path { fill: #363636; stroke: #1a1a1a; stroke-width: 6; }
.rails .ridge { fill: none; stroke-width: 10; }
.floor { fill: #838a8a; stroke: #1a1a1a; stroke-width: 7; }
.grid path { fill: none; stroke: #1a1a1a; stroke-width: 6; }
.axes path { stroke-width: 4; }
.axes text { font-size: 27px; }
```
